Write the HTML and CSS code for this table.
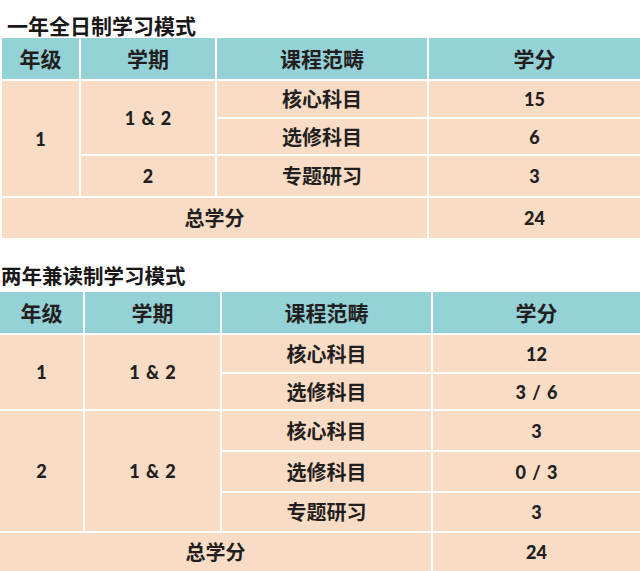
FILE: index.html
```html
<!DOCTYPE html>
<html lang="zh-CN">
<head>
<meta charset="utf-8">
<title>学习模式</title>
<link rel="stylesheet" href="styles.css">
</head>
<body>
<section class="mode mode-full">
  <h2 class="title title-full">一年全日制学习模式</h2>
  <div class="grid grid-full">
    <div class="cell head">年级</div>
    <div class="cell head">学期</div>
    <div class="cell head">课程范畴</div>
    <div class="cell head">学分</div>

    <div class="cell num span-r3">1</div>
    <div class="cell num span-r2">1 &amp; 2</div>
    <div class="cell">核心科目</div>
    <div class="cell num">15</div>
    <div class="cell">选修科目</div>
    <div class="cell num">6</div>
    <div class="cell num">2</div>
    <div class="cell">专题研习</div>
    <div class="cell num">3</div>

    <div class="cell span-c3">总学分</div>
    <div class="cell num">24</div>
  </div>
</section>

<section class="mode mode-part">
  <h2 class="title title-part">两年兼读制学习模式</h2>
  <div class="grid grid-part">
    <div class="cell head">年级</div>
    <div class="cell head">学期</div>
    <div class="cell head">课程范畴</div>
    <div class="cell head">学分</div>

    <div class="cell num span-r2">1</div>
    <div class="cell num span-r2">1 &amp; 2</div>
    <div class="cell">核心科目</div>
    <div class="cell num">12</div>
    <div class="cell">选修科目</div>
    <div class="cell num">3 / 6</div>

    <div class="cell num span-r3">2</div>
    <div class="cell num span-r3">1 &amp; 2</div>
    <div class="cell">核心科目</div>
    <div class="cell num">3</div>
    <div class="cell">选修科目</div>
    <div class="cell num">0 / 3</div>
    <div class="cell">专题研习</div>
    <div class="cell num">3</div>

    <div class="cell span-c3">总学分</div>
    <div class="cell num">24</div>
  </div>
</section>
</body>
</html>
```

FILE: styles.css
```css
html, body {
  margin: 0;
  padding: 0;
  background: #ffffff;
}

body {
  width: 640px;
  height: 571px;
  overflow: hidden;
  font-family: "Lato", "Noto Sans CJK SC", sans-serif;
  color: #231f20;
}

.title {
  margin: 0;
  font-family: "Noto Sans CJK SC", sans-serif;
  font-weight: 700;
  font-size: 21px;
  line-height: 25px;
  color: #1a1718;
}

.title-full {
  padding-top: 13px;
  padding-left: 7px;
  height: 25px;
}

.title-part {
  margin-top: 25px;
  padding-left: 1px;
  height: 25px;
  margin-bottom: 4px;
  font-size: 20.5px;
}

.grid {
  display: grid;
  gap: 2px;
  background: #ffffff;
}

.grid-full {
  padding-left: 2px;
  grid-template-columns: 77px 134px 210px 1fr;
  grid-template-rows: 41px 36px 35px 40px 40px;
}

.grid-part {
  grid-template-columns: 83px 135px 209px 1fr;
  grid-template-rows: 41px 37px 35px 39px 39px 38px 38px;
}

.cell {
  display: flex;
  align-items: center;
  justify-content: center;
  background: #f8dcc5;
  font-family: "Noto Sans CJK SC", sans-serif;
  font-weight: 700;
  font-size: 20px;
  line-height: 1;
}

.cell.head {
  background: #95d2d7;
  font-size: 21px;
}

.cell.num {
  font-family: "Lato", "Noto Sans CJK SC", sans-serif;
  font-size: 18px;
  font-weight: 900;
  word-spacing: 2px;
}

.span-r2 { grid-row: span 2; }
.span-r3 { grid-row: span 3; }
.span-c3 { grid-column: span 3; }
```
